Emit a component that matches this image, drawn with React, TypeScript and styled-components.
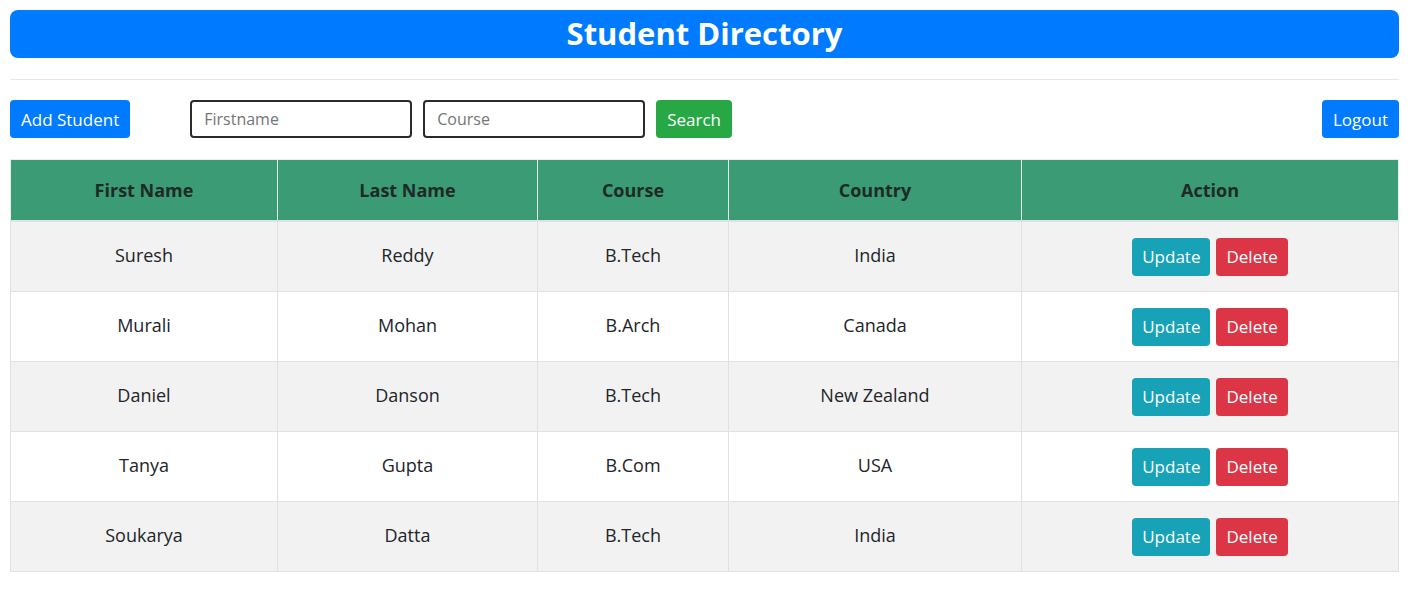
import React from "react";
import styled, { createGlobalStyle } from "styled-components";

interface Student {
  id: number;
  firstName: string;
  lastName: string;
  course: string;
  country: string;
}

const students: Student[] = [
  { id: 1, firstName: "Suresh", lastName: "Reddy", course: "B.Tech", country: "India" },
  { id: 2, firstName: "Murali", lastName: "Mohan", course: "B.Arch", country: "Canada" },
  { id: 3, firstName: "Daniel", lastName: "Danson", course: "B.Tech", country: "New Zealand" },
  { id: 4, firstName: "Tanya", lastName: "Gupta", course: "B.Com", country: "USA" },
  { id: 5, firstName: "Soukarya", lastName: "Datta", course: "B.Tech", country: "India" },
];

const columns = [
  { label: "First Name", width: 267 },
  { label: "Last Name", width: 260 },
  { label: "Course", width: 191 },
  { label: "Country", width: 293 },
  { label: "Action", width: 377 },
];

const GlobalStyle = createGlobalStyle`
  body {
    margin: 0;
    font-family: "Open Sans", "Noto Sans", sans-serif;
    color: #212529;
    background: #fff;
  }
`;

const Page = styled.div`
  padding: 10px;
`;

const Banner = styled.h1`
  margin: 0;
  height: 48px;
  background-color: #007bff;
  border-radius: 8px;
  color: #fff;
  font-size: 31px;
  font-weight: 700;
  line-height: 46px;
  text-align: center;
`;

const Divider = styled.hr`
  margin: 21px 0 20px;
  border: 0;
  border-top: 1px solid #e6e9ec;
`;

const Toolbar = styled.div`
  display: flex;
  align-items: center;
  margin-bottom: 21px;
`;

const SearchGroup = styled.div`
  display: flex;
  align-items: center;
  gap: 11px;
  margin-left: 60px;
`;

const Button = styled.button<{ $variant: "primary" | "success" | "info" | "danger" }>`
  height: 38px;
  padding: 0 11px;
  border: none;
  border-radius: 4px;
  font-family: inherit;
  font-size: 17px;
  color: #fff;
  cursor: pointer;
  background-color: ${(p) =>
    p.$variant === "primary"
      ? "#007bff"
      : p.$variant === "success"
      ? "#28a745"
      : p.$variant === "info"
      ? "#17a2b8"
      : "#dc3545"};
`;

const LogoutButton = styled(Button)`
  margin-left: auto;
`;

const ActionButton = styled(Button)`
  padding: 0 10px;
`;

const SearchInput = styled.input`
  width: 222px;
  height: 38px;
  box-sizing: border-box;
  padding: 0 12px;
  border: 2px solid #2b2b2b;
  border-radius: 4px;
  font-family: inherit;
  font-size: 16px;
  color: #495057;

  &::placeholder {
    color: #757575;
  }
`;

const Table = styled.table`
  width: 100%;
  table-layout: fixed;
  border-collapse: collapse;
  border: 1px solid #dee2e6;
`;

const HeadCell = styled.th`
  height: 60px;
  padding: 0 12px;
  background-color: #3a9b74;
  border: 1px solid #e8f0ec;
  border-bottom: 2px solid #dee2e6;
  font-size: 18px;
  font-weight: 700;
  color: #1f2a26;
  text-align: center;
  vertical-align: middle;
`;

const Row = styled.tr<{ $striped: boolean }>`
  background-color: ${(p) => (p.$striped ? "#f2f2f2" : "#fff")};
`;

const Cell = styled.td`
  height: 65px;
  padding: 0 12px 4px;
  border: 1px solid #dee2e6;
  font-size: 18px;
  text-align: center;
  vertical-align: middle;
`;

const ActionCell = styled(Cell)`
  height: 69px;
  padding: 0 12px;
`;

const Actions = styled.div`
  display: flex;
  justify-content: center;
  gap: 6px;
`;

export default function App() {
  return (
    <Page>
      <GlobalStyle />
      <Banner>Student Directory</Banner>
      <Divider />
      <Toolbar>
        <Button $variant="primary">Add Student</Button>
        <SearchGroup>
          <SearchInput placeholder="Firstname" />
          <SearchInput placeholder="Course" />
          <Button $variant="success">Search</Button>
        </SearchGroup>
        <LogoutButton $variant="primary">Logout</LogoutButton>
      </Toolbar>
      <Table>
        <colgroup>
          {columns.map((c) => (
            <col key={c.label} style={{ width: c.width }} />
          ))}
        </colgroup>
        <thead>
          <tr>
            {columns.map((c) => (
              <HeadCell key={c.label}>{c.label}</HeadCell>
            ))}
          </tr>
        </thead>
        <tbody>
          {students.map((s, i) => (
            <Row key={s.id} $striped={i % 2 === 0}>
              <Cell>{s.firstName}</Cell>
              <Cell>{s.lastName}</Cell>
              <Cell>{s.course}</Cell>
              <Cell>{s.country}</Cell>
              <ActionCell>
                <Actions>
                  <ActionButton $variant="info">Update</ActionButton>
                  <ActionButton $variant="danger">Delete</ActionButton>
                </Actions>
              </ActionCell>
            </Row>
          ))}
        </tbody>
      </Table>
    </Page>
  );
}
